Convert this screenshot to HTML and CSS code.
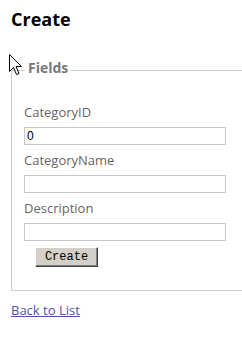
FILE: index.html
```html
<!DOCTYPE html>
<html lang="en">
<head>
    <meta charset="UTF-8">
    <meta name="viewport" content="width=device-width, initial-scale=1.0">
    <title>Create</title>
    <link rel="stylesheet" href="styles.css">
</head>
<body>
    <h2 class="page-title">Create</h2>

    <form class="create-form">
        <fieldset class="fields">
            <legend>Fields</legend>

            <div class="field">
                <label for="CategoryID">CategoryID</label>
                <input type="text" id="CategoryID" value="0">
            </div>

            <div class="field">
                <label for="CategoryName">CategoryName</label>
                <input type="text" id="CategoryName">
            </div>

            <div class="field">
                <label for="Description">Description</label>
                <input type="text" id="Description">
            </div>

            <button type="button" class="submit-button">Create</button>
        </fieldset>
    </form>

    <p class="back-link"><a href="#">Back to List</a></p>

    <!-- mouse pointer captured in the screenshot -->
    <svg class="cursor" width="14" height="22" viewBox="0 0 14 22">
        <path d="M0.5 0.5 L0.5 17.5 L4.5 13.5 L7.5 20.5 L10 19.5 L7 12.5 L12.5 12.5 Z" fill="#fff" stroke="#000" stroke-width="1" stroke-linejoin="miter"/>
    </svg>
</body>
</html>
```

FILE: styles.css
```css
* {
    box-sizing: border-box;
}

html, body {
    margin: 0;
    overflow: hidden;
    background: #fff;
}

body {
    position: relative;
    padding: 7px 11px 0;
    font-family: 'Open Sans', 'Noto Sans', sans-serif;
    color: #666;
}

.page-title {
    margin: 0 0 28px;
    font-size: 18px;
    line-height: 24px;
    font-weight: bold;
    color: #000;
}

.create-form {
    margin: 0;
}

.fields {
    margin: 0 -12px 0 0;
    padding: 21px 12px 23px;
    border: 1px solid #ccc;
    min-width: 0;
}

.fields legend {
    padding: 0 3px 4px;
    margin-left: 1px;
    font-size: 14px;
    line-height: 18px;
    font-weight: bold;
    color: #777;
}

.field {
    display: flex;
    flex-direction: column;
    align-items: flex-start;
}

.field label {
    font-size: 13px;
    line-height: 20px;
    margin-bottom: 5px;
    color: #666;
}

.field input {
    width: 202px;
    height: 18px;
    margin: 0 0 5px;
    padding: 0 2px;
    border: 1px solid #c8c8c8;
    font-family: 'Liberation Sans', sans-serif;
    font-size: 12px;
    color: #000;
    outline: none;
}

.submit-button {
    display: block;
    width: 63px;
    height: 20px;
    margin: 1px 0 0 11px;
    padding: 0;
    background: #d4d0c8;
    border: 1px solid;
    border-color: #fff #404040 #404040 #fff;
    box-shadow: inset -1px -1px 0 #808080;
    font-family: 'Liberation Mono', monospace;
    font-size: 12px;
    color: #000;
}

.back-link {
    margin: 10px 0 0;
    font-size: 13px;
    line-height: 18px;
}

.back-link a {
    color: #5050a8;
}

.cursor {
    position: absolute;
    left: 9px;
    top: 54px;
}
```
